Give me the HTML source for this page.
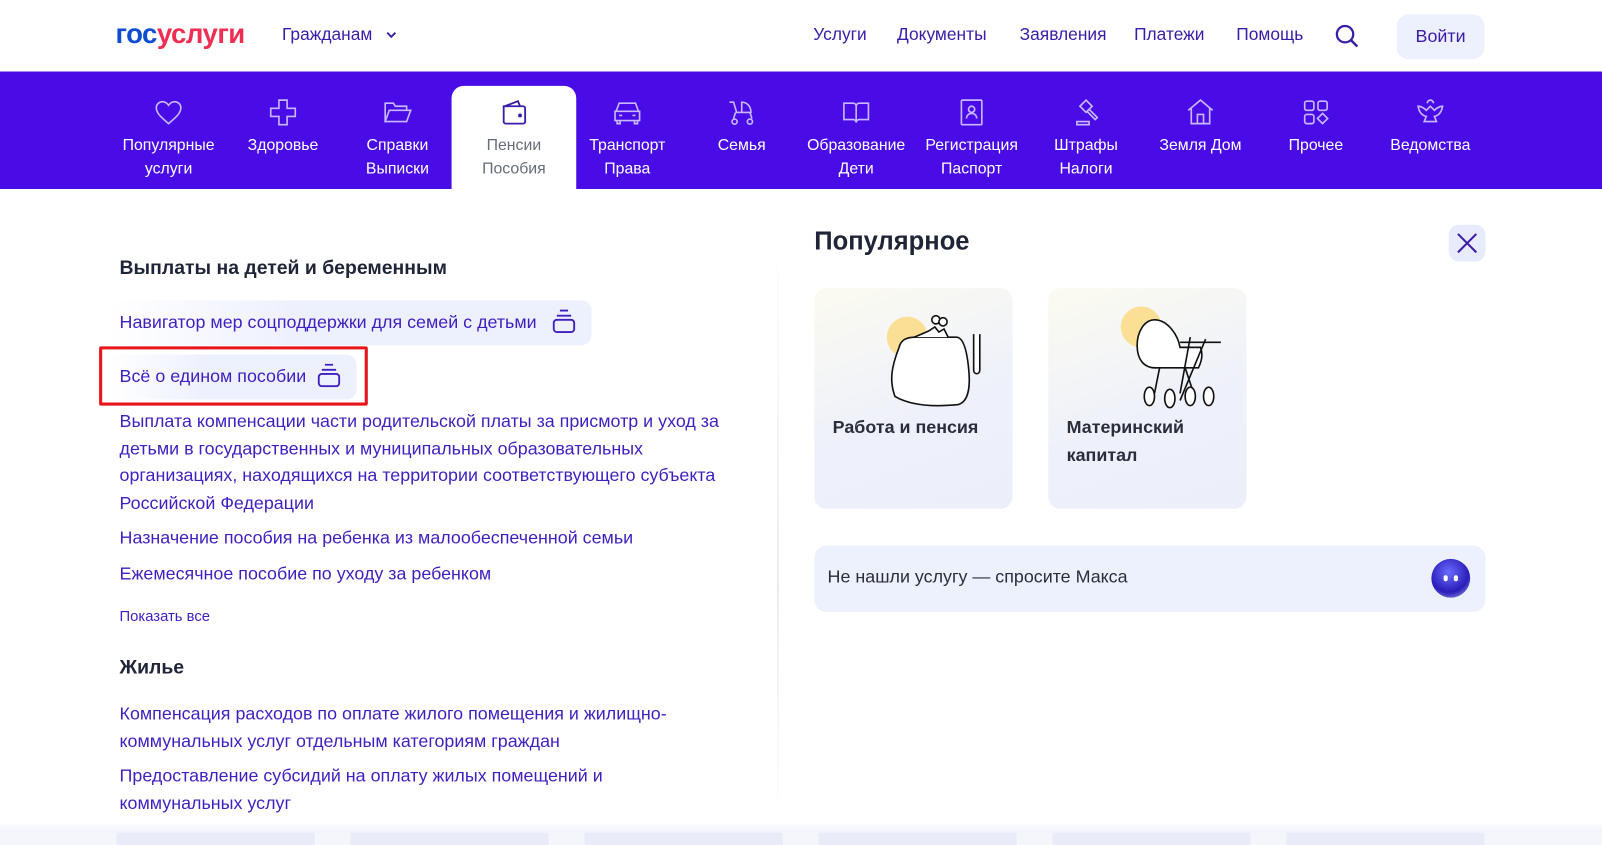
<!DOCTYPE html>
<html><head><meta charset="utf-8">
<style>
*{box-sizing:border-box;margin:0;padding:0}
html,body{width:1602px;height:845px;overflow:hidden;background:#fff}
body{font-family:"Liberation Sans",sans-serif;color:#1f2537;position:relative}
#w{position:absolute;left:0;top:0;width:1568px;height:827px;transform:scale(1.02168);transform-origin:0 0}
.a{position:absolute}
.hdr a{color:#3a1ca8;font-size:17px;text-decoration:none}
.nav{top:70px;left:0;width:1568px;height:115px;background:#4a0ce6}
.tab{position:absolute;top:0;width:122px;height:115px;text-align:center;color:#fff;font-size:15.5px;line-height:23px}
.tab svg{display:block;margin:25px auto 6px;width:30px;height:30px}
.tab.act{background:#fff;color:#666c7a;top:14px;height:101px;border-radius:12px 12px 0 0}
.tab.act svg{margin-top:11px}
.lk{color:#3f1fbf;font-size:17.5px;line-height:26.5px}
h3{font-size:19px;font-weight:bold;color:#1f2537}
.card{background:linear-gradient(160deg,#fbfbf0 0%,#eef0fb 60%,#eceffa 100%);border-radius:12px}
</style></head><body><div id="w">
<div class="a hdr" style="top:0;left:0;width:1568px;height:70px">
 <div class="a" style="left:113px;top:18px;font-size:27px;font-weight:bold;letter-spacing:-0.5px"><span style="color:#0d4cd3">гос</span><span style="color:#ee2f53">услуги</span></div>
 <a class="a" style="left:276px;top:24px">Гражданам</a>
 <svg class="a" style="left:377px;top:30px" width="12" height="10"><path d="M2 2l4 4 4-4" stroke="#3a1ca8" stroke-width="1.8" fill="none"/></svg>
 <a class="a" style="left:796px;top:24px">Услуги</a>
 <a class="a" style="left:878px;top:24px">Документы</a>
 <a class="a" style="left:998px;top:24px">Заявления</a>
 <a class="a" style="left:1110px;top:24px">Платежи</a>
 <a class="a" style="left:1210px;top:24px">Помощь</a>
 <svg class="a" style="left:1306px;top:23px" width="26" height="26"><circle cx="10.5" cy="10.5" r="8" stroke="#3a1ca8" stroke-width="2.2" fill="none"/><path d="M16.5 16.5l6 6" stroke="#3a1ca8" stroke-width="2.4"/></svg>
 <div class="a" style="left:1367px;top:14px;width:86px;height:44px;border-radius:12px;background:#edf0fd;color:#3a1ca8;font-size:17.5px;text-align:center;line-height:42px">Войти</div>
</div>
<div class="a nav">
 <div class="tab" style="left:104px"><svg viewBox="0 0 30 30" fill="none" stroke="#c7b8ff" stroke-width="1.6"><path d="M15 26C8 20 3 16 3 10.5 3 7 6 4.5 9 4.5c2.7 0 4.6 1.6 6 3.5 1.4-1.9 3.3-3.5 6-3.5 3 0 6 2.5 6 6C27 16 22 20 15 26z"/></svg>Популярные<br>услуги</div>
 <div class="tab" style="left:216px"><svg viewBox="0 0 30 30" fill="none" stroke="#c7b8ff" stroke-width="1.6"><path d="M11 3h8v8h8v8h-8v8h-8v-8H3v-8h8z"/></svg>Здоровье</div>
 <div class="tab" style="left:328px"><svg viewBox="0 0 30 30" fill="none" stroke="#c7b8ff" stroke-width="1.6"><path d="M3 24V6h8l2 3h11v4M3 24l4-11h21l-4 11z"/></svg>Справки<br>Выписки</div>
 <div class="tab act" style="left:442px"><svg viewBox="0 0 30 30" fill="none" stroke="#3a1ca8" stroke-width="1.8"><path d="M6 9l13-5 2 5M5 9h19a2 2 0 0 1 2 2v13a2 2 0 0 1-2 2H7a2 2 0 0 1-2-2z"/><circle cx="21" cy="18" r="1" fill="#3a1ca8"/></svg>Пенсии<br>Пособия</div>
 <div class="tab" style="left:553px"><svg viewBox="0 0 30 30" fill="none" stroke="#c7b8ff" stroke-width="1.6"><path d="M4 14l3-8h16l3 8M3 14h24v9H3zM5 23v3h3v-3M22 23v3h3v-3M7 18h3M20 18h3"/></svg>Транспорт<br>Права</div>
 <div class="tab" style="left:665px"><svg viewBox="0 0 30 30" fill="none" stroke="#c7b8ff" stroke-width="1.6"><path d="M3 5h4l3 10h14c0-6-4-10-9-10v10M9 15l-2 6M23 15l2 6"/><circle cx="8" cy="24" r="2.5"/><circle cx="23" cy="24" r="2.5"/></svg>Семья</div>
 <div class="tab" style="left:777px"><svg viewBox="0 0 30 30" fill="none" stroke="#c7b8ff" stroke-width="1.6"><path d="M3 6h9a3 3 0 0 1 3 3v16a3 3 0 0 0-3-3H3zM27 6h-9a3 3 0 0 0-3 3v16a3 3 0 0 1 3-3h9z"/></svg>Образование<br>Дети</div>
 <div class="tab" style="left:890px"><svg viewBox="0 0 30 30" fill="none" stroke="#c7b8ff" stroke-width="1.6"><rect x="5" y="3" width="20" height="24" rx="1"/><circle cx="15" cy="12" r="3"/><path d="M10 21c0-3 2.2-5 5-5s5 2 5 5"/></svg>Регистрация<br>Паспорт</div>
 <div class="tab" style="left:1002px"><svg viewBox="0 0 30 30" fill="none" stroke="#c7b8ff" stroke-width="1.6"><path d="M9 9l6-6 6 6-6 6zM18 12l8 8-2 2-8-8M6 24h12v3H6z"/></svg>Штрафы<br>Налоги</div>
 <div class="tab" style="left:1114px"><svg viewBox="0 0 30 30" fill="none" stroke="#c7b8ff" stroke-width="1.6"><path d="M3 13L15 3l12 10M6 11v15h18V11M12 26v-9h6v9"/></svg>Земля Дом</div>
 <div class="tab" style="left:1227px"><svg viewBox="0 0 30 30" fill="none" stroke="#c7b8ff" stroke-width="1.6"><rect x="4" y="4" width="9" height="9" rx="2"/><rect x="17" y="4" width="9" height="9" rx="2"/><rect x="4" y="17" width="9" height="9" rx="2"/><path d="M21.5 16l5 5-5 5-5-5z"/></svg>Прочее</div>
 <div class="tab" style="left:1339px"><svg viewBox="0 0 30 30" fill="none" stroke="#c7b8ff" stroke-width="1.6"><path d="M3 9c3 0 6 2 8 4l4-4 4 4c2-2 5-4 8-4-1 6-4 9-8 10l2 5h-12l2-5c-4-1-7-4-8-10zM12 6a3 3 0 0 1 6 0"/></svg>Ведомства</div>
</div>

<div class="a" style="left:761px;top:228px;width:1px;height:580px;background:linear-gradient(#fff,#e3e6ee 40%,#d8dbe5 60%,#fff)"></div>

<h3 class="a" style="left:117px;top:252px">Выплаты на детей и беременным</h3>
<div class="a lk" style="left:107px;top:294px;width:472px;height:44px;border-radius:10px;background:linear-gradient(90deg,#fff,#edf0fd 40%);padding:8px 10px">Навигатор мер соцподдержки для семей с детьми</div>
<svg class="a" style="left:540px;top:302px" width="24" height="24" fill="none" stroke="#3f1fbf" stroke-width="1.8"><path d="M8 2h8M5 7h14"/><rect x="2" y="11" width="20" height="12" rx="3"/></svg>
<div class="a lk" style="left:107px;top:347px;width:242px;height:44px;border-radius:10px;background:linear-gradient(90deg,#fff,#edf0fd 40%);padding:8px 10px">Всё о едином пособии</div>
<svg class="a" style="left:310px;top:355px" width="24" height="24" fill="none" stroke="#3f1fbf" stroke-width="1.8"><path d="M8 2h8M5 7h14"/><rect x="2" y="11" width="20" height="12" rx="3"/></svg>
<div class="a" style="left:97px;top:339px;width:263px;height:58px;border:3px solid #e8141a;border-radius:2px"></div>
<div class="a lk" style="left:117px;top:399px;width:620px">Выплата компенсации части родительской платы за присмотр и уход за детьми в государственных и муниципальных образовательных организациях, находящихся на территории соответствующего субъекта Российской Федерации</div>
<div class="a lk" style="left:117px;top:513px">Назначение пособия на ребенка из малообеспеченной семьи</div>
<div class="a lk" style="left:117px;top:548px">Ежемесячное пособие по уходу за ребенком</div>
<div class="a" style="left:117px;top:596px;font-size:14.5px;color:#3f1fbf">Показать все</div>
<h3 class="a" style="left:117px;top:643px">Жилье</h3>
<div class="a lk" style="left:117px;top:685px;width:580px">Компенсация расходов по оплате жилого помещения и жилищно-коммунальных услуг отдельным категориям граждан</div>
<div class="a lk" style="left:117px;top:746px;width:520px">Предоставление субсидий на оплату жилых помещений и коммунальных услуг</div>

<div class="a" style="left:797px;top:222px;font-size:25px;font-weight:bold">Популярное</div>
<div class="a" style="left:1418px;top:220px;width:36px;height:36px;border-radius:10px;background:#e8ebfb"></div>
<svg class="a" style="left:1424px;top:226px" width="24" height="24"><path d="M3 3l18 18M21 3L3 21" stroke="#3a1ca8" stroke-width="2"/></svg>

<div class="a card" style="left:797px;top:282px;width:194px;height:216px"></div>
<div class="a card" style="left:1026px;top:282px;width:194px;height:216px"></div>
<div class="a" style="left:868px;top:310px;width:40px;height:40px;border-radius:50%;background:#fadf94"></div>
<div class="a" style="left:1097px;top:300px;width:40px;height:40px;border-radius:50%;background:#fadf94"></div>
<svg class="a" style="left:868px;top:305px" width="110" height="95" fill="#fff" stroke="#111" stroke-width="1.6"><path d="M12 35c2-8 8-10 16-10h40c6 0 10 10 12 30 2 18 0 33-10 36-20 2-45 2-62-8-6-16-3-30 4-48z"/><path d="M27 25l14-6 6-4 4 5 5-3 4 8M85 22v35c0 5 6 5 6 0V22"/><circle cx="48" cy="8" r="4"/><circle cx="55" cy="10" r="4"/></svg>
<svg class="a" style="left:1110px;top:310px" width="95" height="95" fill="#fff" stroke="#111" stroke-width="1.6"><path d="M20 3c-10 0-17 12-17 25s6 23 20 22h40c4-8 4-15 2-20H45c-2-12-12-27-25-27z"/><path d="M45 25h40M70 22l-25 60M50 50l10 30M25 50l-5 25M55 20l-10 55"/><ellipse cx="15" cy="78" rx="5" ry="9"/><ellipse cx="35" cy="80" rx="5" ry="9"/><ellipse cx="55" cy="78" rx="5" ry="9"/><ellipse cx="73" cy="78" rx="5" ry="9"/></svg>
<div class="a" style="left:815px;top:405px;font-size:17.5px;line-height:27px;font-weight:bold;color:#2a2d3a">Работа и пенсия</div>
<div class="a" style="left:1044px;top:405px;font-size:17.5px;line-height:27px;font-weight:bold;color:#2a2d3a">Материнский<br>капитал</div>

<div class="a" style="left:797px;top:534px;width:657px;height:65px;border-radius:12px;background:#edf0fd"></div>
<div class="a" style="left:810px;top:554px;font-size:17.5px;color:#2a2d3a">Не нашли услугу — спросите Макса</div>
<div class="a" style="left:1401px;top:547px;width:38px;height:38px;border-radius:50%;background:radial-gradient(circle at 45% 35%,#6a6cff,#2a1cb8 60%,#b7c0e8 100%)"></div>
<div class="a" style="left:1413px;top:563px;width:4px;height:6px;background:#fff;border-radius:2px"></div>
<div class="a" style="left:1423px;top:563px;width:4px;height:6px;background:#fff;border-radius:2px"></div>

<div class="a" style="left:0;top:815px;width:1568px;height:30px;background:#f4f6fb"></div>
<div class="a" style="left:114px;top:815px;width:194px;height:30px;background:#e9ecf8"></div>
<div class="a" style="left:343px;top:815px;width:194px;height:30px;background:#e9ecf8"></div>
<div class="a" style="left:572px;top:815px;width:194px;height:30px;background:#e9ecf8"></div>
<div class="a" style="left:801px;top:815px;width:194px;height:30px;background:#e9ecf8"></div>
<div class="a" style="left:1030px;top:815px;width:194px;height:30px;background:#e9ecf8"></div>
<div class="a" style="left:1259px;top:815px;width:194px;height:30px;background:#e9ecf8"></div>
<div class="a" style="left:0;top:805px;width:1568px;height:10px;background:linear-gradient(#fff,#f1f3f9)"></div>
</div></body></html>
